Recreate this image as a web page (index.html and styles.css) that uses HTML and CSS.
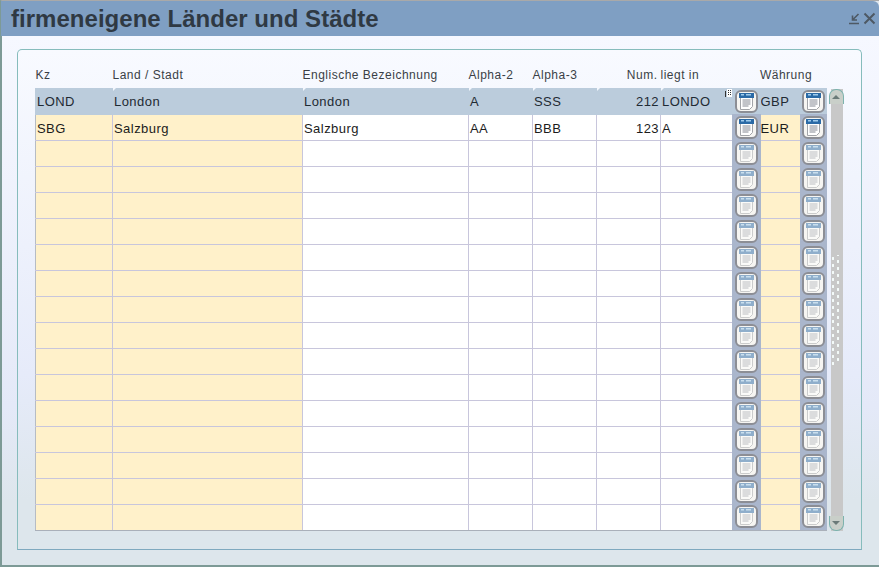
FILE: index.html
```html
<!DOCTYPE html>
<html lang="de">
<head>
    <meta charset="UTF-8">
    <title>firmeneigene Länder und Städte</title>
    <link rel="stylesheet" href="styles.css">
</head>
<body>
    <svg class="defs" width="0" height="0">
        <symbol id="sheet" viewBox="0 0 17 17">
            <path d="M2.500 3h12v10.500l-3 3h-9z" fill="#fff" stroke="#a2a4a8" stroke-width="1"/>
            <path d="M1 0h15v5h-15z" fill="#2b6aa6"/>
            <path d="M3 1h3v1.500h-3zM8 1h5v1.500h-5z" fill="#9fcbec"/>
            <path d="M4.500 7h8M4.500 9h8M4.500 11h8M4.500 13h6" stroke="#858993" stroke-width="1"/>
        </symbol>
    </svg>
    <div class="window">
        <div class="titlebar">
            <h1>firmeneigene Länder und Städte</h1>
            <div class="winbtns">
                <svg width="13" height="13" viewBox="0 0 13 13"><path d="M1 11.500h10M10.500 2l-5.500 5.500M4.500 3.500v4.500h4.500" fill="none" stroke="#4e5964" stroke-width="1.600"/></svg>
                <svg width="13" height="13" viewBox="0 0 13 13"><path d="M1.500 1.500l10 10M11.500 1.500l-10 10" fill="none" stroke="#4e5964" stroke-width="2"/></svg>
            </div>
        </div>
        <div class="content">
            <div class="panel">
                <div class="tablewrap">
                    <table class="grid">
                        <colgroup>
                            <col class="c-kz"><col class="c-land"><col class="c-eng"><col class="c-a2"><col class="c-a3"><col class="c-num"><col class="c-lieg"><col class="c-btn1"><col class="c-wae"><col class="c-btn2">
                        </colgroup>
                        <thead>
                            <tr>
                                <th>Kz</th><th>Land / Stadt</th><th>Englische Bezeichnung</th><th>Alpha-2</th><th>Alpha-3</th><th class="num">Num.</th><th>liegt in</th><th class="center" colspan="3">Währung</th>
                            </tr>
                        </thead>
                        <tbody id="rows"></tbody>
                    </table>
                    <div class="scrollbar">
                        <div class="sb-btn sb-up"><span class="arrow-up"></span></div>
                        <div class="sb-grip"></div>
                        <div class="sb-btn sb-down"><span class="arrow-down"></span></div>
                    </div>
                </div>
            </div>
        </div>
    </div>
    <script>
        var data = [
            ['LOND', 'London', 'London', 'A', 'SSS', '212', 'LONDO', 'GBP'],
            ['SBG', 'Salzburg', 'Salzburg', 'AA', 'BBB', '123', 'A', 'EUR']
        ];
        var html = '';
        for (var i = 0; i < 17; i++) {
            var r = data[i] || ['', '', '', '', '', '', '', ''];
            var cls = i === 0 ? 'selected' : (data[i] ? 'filled' : 'empty');
            var btn = '<td class="btn"><span class="sheetbtn"><svg width="17" height="17"><use href="#sheet"/></svg></span></td>';
            var grip = i === 0 ? '<span class="colgrip"></span>' : '';
            html += '<tr class="' + cls + '">' +
                '<td class="req">' + r[0] + '</td>' +
                '<td class="req">' + r[1] + '</td>' +
                '<td>' + r[2] + '</td>' +
                '<td>' + r[3] + '</td>' +
                '<td>' + r[4] + '</td>' +
                '<td class="num">' + r[5] + '</td>' +
                '<td>' + r[6] + grip + '</td>' +
                btn +
                '<td class="req wae">' + r[7] + '</td>' +
                btn + '</tr>';
        }
        document.getElementById('rows').innerHTML = html;
    </script>
</body>
</html>
```

FILE: styles.css
```css
html, body {
    margin: 0;
    padding: 0;
    height: 100%;
    overflow: hidden;
}
body {
    font-family: "Liberation Sans", Arial, sans-serif;
    font-size: 12px;
    background-color: #dfe7ee;
}
.defs {
    position: absolute;
}
.window {
    height: 100vh;
    box-sizing: border-box;
    display: flex;
    flex-direction: column;
    border-top: 1px solid #a9a9a9;
    border-left: 2px solid #7d9a96;
    border-bottom: 2px solid #7d9a96;
}
.titlebar {
    height: 35px;
    flex: none;
    margin-left: -1px;
    display: flex;
    align-items: center;
    justify-content: space-between;
    background-color: #7f9fc3;
    border-top-right-radius: 6px;
}
.titlebar h1 {
    margin: 0 0 0 10px;
    font-size: 24px;
    font-weight: bold;
    letter-spacing: 0.03px;
    color: #2f3943;
}
.winbtns {
    display: flex;
    gap: 2px;
    margin-right: 3px;
    align-items: center;
}
.content {
    flex: 1;
    min-height: 0;
    padding: 13px 17px 15px 15px;
    background: linear-gradient(#f6f8ff 0%, #e4e9f8 70%, #dde6ec 88%);
}
.panel {
    height: 100%;
    box-sizing: border-box;
    border: 1px solid #86bcbc;
    border-bottom-color: #7fa9bf;
    border-radius: 5px 5px 0 0;
    padding: 12px 16px 0 17px;
    background: linear-gradient(#f8faff 0%, #e6ebfa 65%, #dde6ec 90%);
}
.tablewrap {
    display: flex;
    align-items: flex-end;
    gap: 2px;
}
.grid {
    border-collapse: collapse;
    table-layout: fixed;
    width: 791px;
    color: #1c1c1c;
}
.c-kz { width: 77px; }
.c-land { width: 190px; }
.c-eng { width: 166px; }
.c-a2 { width: 64px; }
.c-a3 { width: 64px; }
.c-num { width: 64px; }
.c-lieg { width: 71px; }
.c-btn1 { width: 29px; }
.c-wae { width: 39px; }
.c-btn2 { width: 27px; }
.grid th {
    height: 26px;
    padding: 0;
    font-weight: normal;
    text-align: left;
    color: #3a3f46;
    letter-spacing: 0.5px;
    vertical-align: middle;
}
.grid th.num {
    text-align: right;
    padding-right: 3px;
}
.grid th.center {
    text-align: center;
    padding-left: 14px;
}
.grid td {
    height: 26px;
    box-sizing: border-box;
    padding: 2px 0 0 1px;
    background-color: #fff;
    border-left: 1px solid #c8c6dc;
    border-bottom: 1px solid #c8c6dc;
    font-size: 13px;
    letter-spacing: 0.45px;
    overflow: hidden;
    white-space: nowrap;
}
.grid td.num {
    text-align: right;
    padding-right: 1px;
}
.grid td.req {
    background-color: #fff1ca;
}
.grid td:first-child {
    border-left: 1px solid #b6bcc4;
}
.grid td.wae {
    border-left: none;
    padding-left: 0;
}
.grid td.btn {
    padding: 0;
    background-color: #aab6cc;
    border-left: none;
    border-bottom: none;
    text-align: center;
    line-height: 0;
}
.grid tr.selected td {
    position: relative;
    background-color: #bbccdc;
    border-left-color: #bbccdc;
    border-bottom-color: #bbccdc;
    color: #1f2a33;
}
/* little white notch over each column edge of the first row */
.grid tr.selected td:nth-child(-n+7):not(:first-child)::before {
    content: "";
    position: absolute;
    left: -3px;
    top: 0;
    border-left: 3px solid transparent;
    border-right: 3px solid transparent;
    border-top: 3px solid #f4f7fd;
}
.colgrip {
    position: absolute;
    right: 0;
    top: 1px;
    width: 7px;
    height: 8px;
    background:
        linear-gradient(#333, #333) 0 2px / 1px 6px no-repeat,
        repeating-linear-gradient(#333 0 1px, #fff 1px 2px) 3px 1px / 1px 6px no-repeat,
        repeating-linear-gradient(#333 0 1px, #fff 1px 2px) 5px 1px / 1px 6px no-repeat,
        linear-gradient(#fff, #fff) 2px 0 / 5px 8px no-repeat;
}
.sheetbtn {
    display: inline-flex;
    align-items: center;
    justify-content: center;
    width: 23px;
    height: 23px;
    box-sizing: border-box;
    border: 2px solid #8c8e95;
    border-radius: 6px;
    background-color: #f6f5f2;
}
.empty .sheetbtn svg {
    opacity: 0.5;
}
.grid tbody tr:last-child td {
    border-bottom: 1px solid #aab0ba;
}
.scrollbar {
    width: 15px;
    height: 442px;
    flex: none;
    display: flex;
    flex-direction: column;
    justify-content: space-between;
    align-items: center;
    background: linear-gradient(to right, transparent 2px, #c8c8c8 2px, #c8c8c8 14px, transparent 14px);
}
.sb-btn {
    width: 15px;
    height: 15px;
    box-sizing: border-box;
    display: flex;
    align-items: center;
    justify-content: center;
    background-color: #c9cfc9;
}
.sb-up {
    border: 1px solid #7db3ae;
    border-bottom: none;
    border-radius: 7px 7px 0 0;
}
.sb-down {
    border: 1px solid #7db3ae;
    border-top: none;
    border-radius: 0 0 7px 7px;
}
.arrow-up {
    border-left: 4px solid transparent;
    border-right: 4px solid transparent;
    border-bottom: 4px solid #6b7a78;
}
.arrow-down {
    border-left: 4px solid transparent;
    border-right: 4px solid transparent;
    border-top: 4px solid #6b7a78;
}
.sb-grip {
    width: 10px;
    height: 110px;
    background-image:
        radial-gradient(circle, #f4fbfa 1.1px, transparent 1.5px),
        radial-gradient(circle, #f4fbfa 1.1px, transparent 1.5px);
    background-size: 10px 7px;
    background-position: -3px 0, 2px 3px;
}
```
